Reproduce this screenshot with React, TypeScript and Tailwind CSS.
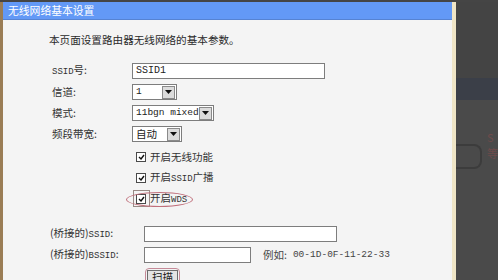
import React from 'react'

const cjk = "font-['Noto_Sans_CJK_SC',sans-serif]"
const mono = "font-['Liberation_Mono','Noto_Sans_CJK_SC',monospace]"

function Arrow() {
  return (
    <span className="flex h-[13px] w-[13px] shrink-0 items-center justify-center border border-[#8a8a8a] bg-[#dcdcdc]">
      <svg width="7" height="4" viewBox="0 0 7 4">
        <path d="M0 0h7L3.5 4z" fill="#111" />
      </svg>
    </span>
  )
}

function Select({ value, width, isMono }: { value: string; width: string; isMono?: boolean }) {
  return (
    <div className={`flex h-[16px] items-center justify-between border border-[#7d7d7d] bg-white pl-[3px] pr-[1px] ${width}`}>
      <span className={`${isMono ? mono + ' text-[9.5px]' : cjk + ' text-[10.5px]'} whitespace-nowrap leading-none text-[#222]`}>{value}</span>
      <Arrow />
    </div>
  )
}

function Check() {
  return (
    <span className="flex h-[10px] w-[10px] shrink-0 items-center justify-center border border-[#4a4a4a] bg-white">
      <svg width="7" height="6" viewBox="0 0 7 6">
        <path d="M1 3l2 2 3-4" fill="none" stroke="#111" strokeWidth="1.4" />
      </svg>
    </span>
  )
}

function Label({ children }: { children: React.ReactNode }) {
  return <span className={`${cjk} w-[80px] shrink-0 text-[10.5px] leading-none text-[#333]`}>{children}</span>
}

function Asc({ children }: { children: React.ReactNode }) {
  return <span className={`${mono} text-[9px]`}>{children}</span>
}

export default function App() {
  return (
    <div className="flex h-[280px] w-[498px] overflow-hidden bg-[#454545] pt-[2px]">
      {/* settings panel */}
      <div className="flex w-[456px] shrink-0 flex-col border-l-[3px] border-r-[4px] border-l-[#9a7d55] border-r-[#efe5c6] bg-[#f4f4f4]">
        <div className="flex h-[18px] shrink-0 items-center border-b border-[#5683d2] bg-[#6399f6] pl-[5px]">
          <span className={`${cjk} text-[10.8px] leading-none text-white`}>无线网络基本设置</span>
        </div>

        <div className="flex flex-col pl-[46px] pt-[12px]">
          <p className={`${cjk} text-[10.6px] leading-[15px] text-[#2a2a2a]`}>本页面设置路由器无线网络的基本参数。</p>

          <div className="mt-[16px] flex flex-col gap-[5px] pl-[3px]">
            <div className="flex h-[16px] items-center">
              <Label><Asc>SSID</Asc>号:</Label>
              <div className="flex h-[16px] w-[193px] items-center border border-[#7d7d7d] bg-white pl-[3px]">
                <span className={`${mono} text-[10px] leading-none text-[#222]`}>SSID1</span>
              </div>
            </div>
            <div className="flex h-[16px] items-center">
              <Label>信道:</Label>
              <Select value="1" width="w-[45px]" isMono />
            </div>
            <div className="flex h-[16px] items-center">
              <Label>模式:</Label>
              <Select value="11bgn mixed" width="w-[82px]" isMono />
            </div>
            <div className="flex h-[16px] items-center">
              <Label>频段带宽:</Label>
              <Select value="自动" width="w-[50px]" />
            </div>

            <div className="mt-[2px] flex flex-col gap-[5px] pl-[84px]">
              {['开启无线功能', '开启SSID广播'].map((t) => (
                <div key={t} className="flex h-[16px] items-center gap-[4px]">
                  <Check />
                  <span className={`${cjk} text-[10.5px] leading-none text-[#333]`}>
                    {t === '开启SSID广播' ? <>开启<Asc>SSID</Asc>广播</> : t}
                  </span>
                </div>
              ))}
              <div className="relative flex h-[16px] items-center gap-[4px]">
                <Check />
                <span className={`${cjk} text-[10.5px] leading-none text-[#333]`}>开启<Asc>WDS</Asc></span>
                <span className="absolute left-[-3px] top-[-1px] h-[17px] w-[17px] border border-[#9a8a86]" />
                <span className="absolute left-[-10px] top-[1px] h-[15px] w-[67px] rounded-[50%] border border-[#c0707c]" />
              </div>
            </div>
          </div>

          <div className="mt-[19px] flex flex-col gap-[5px] pl-[1px]">
            <div className="flex h-[16px] items-center">
              <span className={`${cjk} w-[94px] shrink-0 text-[10.5px] leading-none text-[#333]`}>(桥接的)<Asc>SSID</Asc>:</span>
              <div className="h-[16px] w-[193px] border border-[#7d7d7d] bg-white" />
            </div>
            <div className="flex h-[16px] items-center">
              <span className={`${cjk} w-[94px] shrink-0 text-[10.5px] leading-none text-[#333]`}>(桥接的)<Asc>BSSID</Asc>:</span>
              <div className="h-[16px] w-[107px] border border-[#7d7d7d] bg-white" />
              <span className={`${cjk} ml-[12px] text-[10.5px] leading-none text-[#444]`}>例如:</span>
              <span className={`${mono} ml-[6px] text-[9.5px] leading-none text-[#444]`}>00-1D-0F-11-22-33</span>
            </div>
            <div className="-mt-[5px] pl-[95px]">
              <div className="inline-flex rounded-[4px] border border-[#c58a98] p-[1px]">
                <span className={`${cjk} flex h-[15px] items-center border border-[#6d6d6d] bg-[#e4e4e4] px-[4px] text-[10.5px] leading-none text-[#222]`}>扫描</span>
              </div>
            </div>
          </div>
        </div>
      </div>

      {/* background page behind the window */}
      <div className="flex flex-1 flex-col">
        <div className="h-[76px] shrink-0 bg-[#444444]" />
        <div className="h-[22px] shrink-0 bg-[#3b3f48]" />
        <div className="flex flex-1 items-start gap-[5px] bg-[#4a4a4a] pt-[44px]">
          <div className="h-[25px] w-[26px] shrink-0 rounded-r-[8px] border-2 border-l-0 border-[#3c3c3c]" />
          <div className={`${cjk} -mt-[14px] flex flex-col gap-[2px] text-[11px] leading-[14px] text-[#6e4a4a]`}>
            <span>S</span>
            <span>等</span>
          </div>
        </div>
      </div>
    </div>
  )
}
